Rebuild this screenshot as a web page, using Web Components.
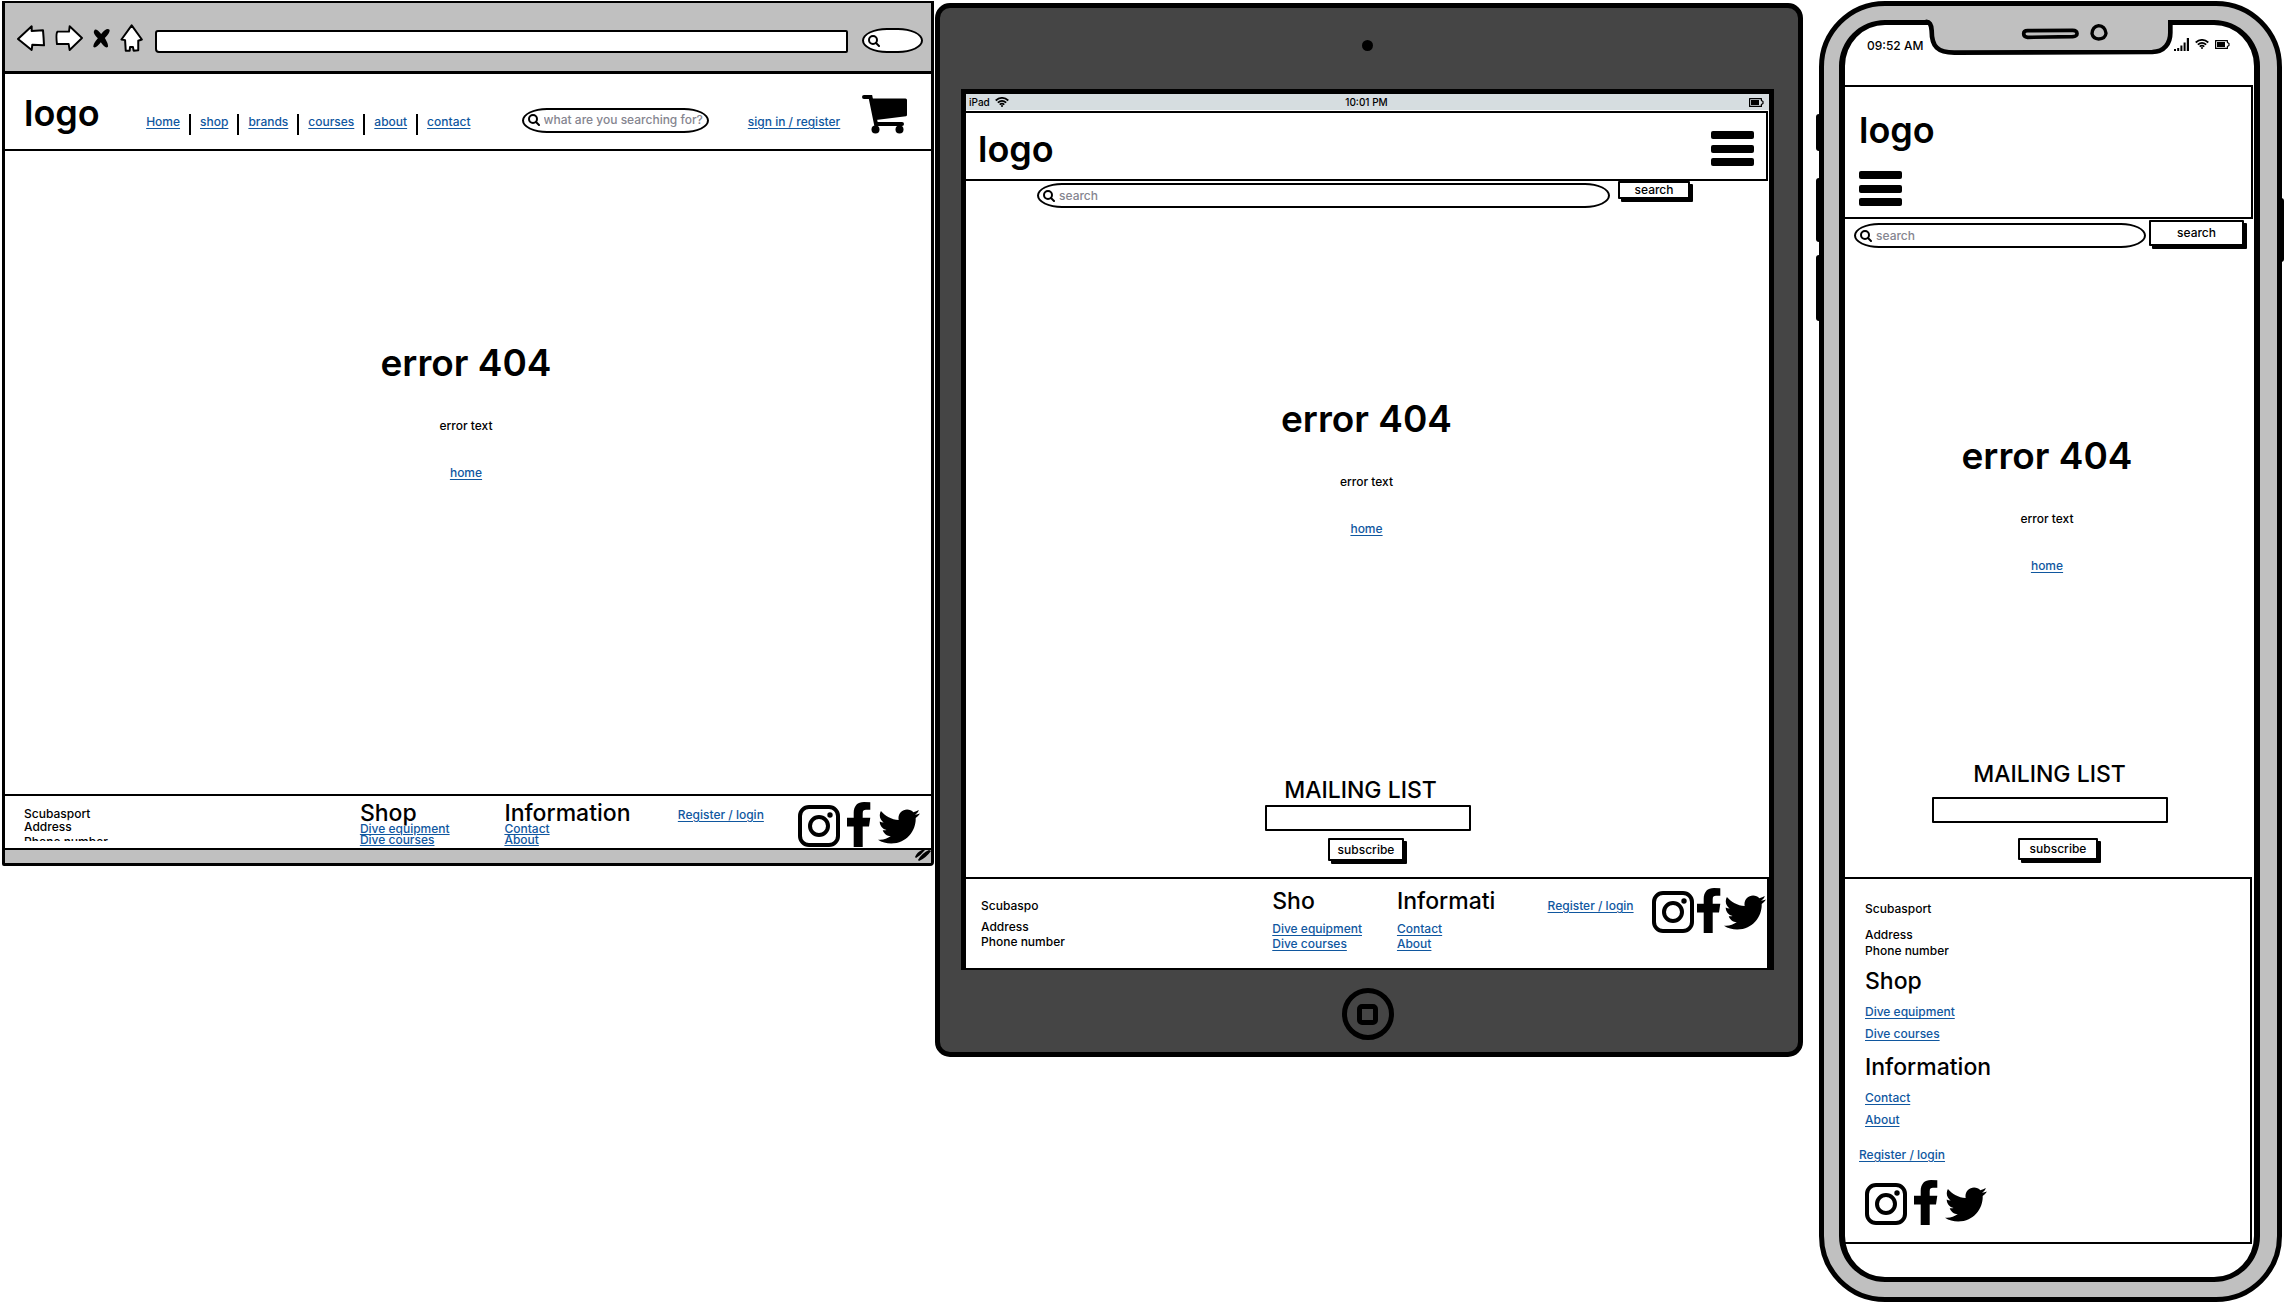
<!DOCTYPE html>
<html lang="en">
<head>
<meta charset="utf-8">
<title>Error 404 wireframes</title>
<style>
  body { margin: 0; background: #fff; color: #000; font: 500 12px/16px Inter, "Liberation Sans", sans-serif; }
</style>
</head>
<body>
<wire-board></wire-board>
<script>
const BASE = `
  *, *::before, *::after { box-sizing: border-box; }
  :host { display: block; }
  h1, h2, p { margin: 0; font-weight: inherit; }
  a { color: #10579f; text-decoration: underline; text-underline-offset: 2px; }
  button, input { font: inherit; color: inherit; margin: 0; padding: 0; border: 0; background: none; min-width: 0; }
  input { outline: 0; }
  svg { display: block; }
`;

function define(name, render) {
  customElements.define(name, class extends HTMLElement {
    connectedCallback() {
      if (this.shadowRoot) return;
      const template = document.createElement('template');
      template.innerHTML = `<style>${BASE}</style>` + render(this);
      this.attachShadow({ mode: 'open' }).append(template.content.cloneNode(true));
    }
  });
}

const ICONS = {
  back: [28, 26, '50 70 84 78', '<path d="M53 112 94 74 94 88 128 86Q130 108 131 131L96 129 94 145Z" fill="#fff" stroke="#000" stroke-width="6" stroke-linejoin="round"/>'],
  forward: [28, 26, '161 70 86 82', '<path d="M245 111 206 74 204 91 168 91Q162 95 166 130L203 130 206 149Z" fill="#fff" stroke="#000" stroke-width="6" stroke-linejoin="round"/>'],
  stop: [17, 20, '284 76 50 60', '<path d="M287 84Q291 74 308 94Q324 74 333 81Q336 90 319 106Q331 126 328 133Q320 139 307 119Q292 139 285 133Q282 126 298 107Q282 92 287 84Z"/>'],
  home: [23, 28, '358 67 69 85', '<path d="M393 71 362 114 373 116 375 148 387 148 388 137 397 137 399 148 413 147 413 118 424 114Z" fill="#fff" stroke="#000" stroke-width="6" stroke-linejoin="round"/>'],
  search: [12, 12, '0 0 12 12', '<g fill="none" stroke="#000" stroke-width="2"><circle cx="5" cy="5" r="4"/><path d="M8 8 11 11" stroke-linecap="round"/></g>'],
  cart: [45, 39, '0 0 45 39', '<path d="M2 2H8.500L14 29H40" fill="none" stroke="#000" stroke-width="4" stroke-linecap="round"/><path d="M9 3.500H43.500Q45 3.500 45 5V20Q45 21 44 21.200L14 25Z"/><circle cx="13.500" cy="34.500" r="4"/><circle cx="37.500" cy="34.500" r="4"/>'],
  menu: [43, 35, '0 0 43 35', '<rect width="43" height="8" rx="2"/><rect y="14" width="43" height="8" rx="2"/><rect y="27" width="43" height="8" rx="2"/>'],
  instagram: [42, 42, '0 0 42 42', '<g fill="none" stroke="#000"><rect x="2" y="2" width="38" height="38" rx="9" stroke-width="4"/><circle cx="21" cy="21" r="9" stroke-width="4"/></g><circle cx="32" cy="10" r="2.700"/>'],
  facebook: [24, 45, '0 0 24 45', '<path d="M23.300.3 17 0C10.500 0 6.700 4 6.700 10.800V15.700H0V24.600H6.700V45H15.700V24.600H22L23.300 15.700H15.700V11.500C15.700 8.500 16.800 7.800 19 7.800H23.300Z"/>'],
  twitter: [42, 35, '0 48 512 416', '<path d="M459.37 151.716c.325 4.548.325 9.097.325 13.645 0 138.72-105.583 298.558-298.558 298.558-59.452 0-114.68-17.219-161.137-47.106 8.447.974 16.568 1.299 25.34 1.299 49.055 0 94.213-16.568 130.274-44.832-46.132-.975-84.792-31.188-98.112-72.772 6.498.974 12.995 1.624 19.818 1.624 9.421 0 18.843-1.3 27.614-3.573-48.081-9.747-84.143-51.98-84.143-102.985v-1.299c13.969 7.797 30.214 12.67 47.431 13.319-28.264-18.843-46.781-51.005-46.781-87.391 0-19.492 5.197-37.36 14.294-52.954 51.655 63.675 129.3 105.258 216.365 109.807-1.624-7.797-2.599-15.918-2.599-24.04 0-57.828 46.782-104.934 104.934-104.934 30.213 0 57.502 12.67 76.67 33.137 23.715-4.548 46.456-13.32 66.599-25.34-7.798 24.366-24.366 44.833-46.132 57.827 21.117-2.273 41.584-8.122 60.426-16.243-14.292 20.791-32.161 39.308-52.628 54.253z"/>'],
  wifi: [14, 10, '0 0 14 10', '<g fill="none" stroke="#000" stroke-width="1.700"><path d="M.7 3.500Q7-1.800 13.300 3.500"/><path d="M2.800 5.700Q7 2 11.200 5.700"/><path d="M4.700 7.600Q7 5.500 9.300 7.600"/></g><circle cx="7" cy="9" r="1"/>'],
  battery: [15, 9, '0 0 15 9', '<path d="M.6.6H12.400V2.500L14 3.500V5.500L12.400 6.500V8.400H.6Z" fill="none" stroke="#000" stroke-width="1.200" stroke-linejoin="round"/><rect x="2" y="2" width="8" height="5"/>'],
  signal: [15, 13, '0 0 15 13', '<path d="M0 11h2v2H0zM3.200 10h2v3h-2zM6.400 7.500h2V13h-2zM9.600 4.500h2V13h-2zM12.800 0H15v13h-2.200z"/>'],
  grip: [17, 11, '0 0 17 11', '<path d="M1 7Q3 2 8 0H11Q7 5 2 8ZM4 10Q8 3 15 0L17 1Q12 8 5 11Z"/>'],
  notch: [249, 38, '372 54 747 114', '<path d="M380 54V66Q391 68 392 92C392 140 410 158 460 158L1054 156C1090 155 1108 130 1108 98V54Z" fill="#c0c0c0"/><path d="M374 66Q391 64 392 92C392 140 410 158 460 158L1054 156C1090 155 1108 130 1108 98V67H1119" fill="none" stroke="#000" stroke-width="14"/><path d="M680 92Q668 92 668 101T680 112L815 110Q829 109 828 100T815 91Z" fill="none" stroke="#000" stroke-width="11"/><path d="M893 77Q874 80 873 101 876 116 893 117 913 116 915 100 912 78 893 77Z" fill="none" stroke="#000" stroke-width="10"/>']
};

define('wire-icon', el => {
  const [w, h, box, body] = ICONS[el.getAttribute('name')];
  return `<style>:host { flex: none; width: ${w}px; }</style>
    <svg width="${w}" height="${h}" viewBox="${box}" aria-hidden="true">${body}</svg>`;
});

define('search-pill', el => `
  <style>
    label { display: flex; align-items: center; gap: 4px; height: 25px; padding: 0 1px 0 4px; border: 2px solid #000; border-radius: 26px / 13px; background: #fff; }
    input { flex: 1; width: 100%; }
    input::placeholder { color: #85858f; opacity: 1; }
  </style>
  <label><wire-icon name="search"></wire-icon>
    <input type="text" aria-label="${el.getAttribute('label')}" placeholder="${el.getAttribute('text') || ''}"></label>`);

define('wire-button', () => `
  <style>
    :host { padding: 0 3px 3px 0; }
    button { display: block; width: 100%; height: var(--button-height, 23px); padding: 0 var(--button-pad, 8px); border: 2px solid #000; border-radius: 1px; background: #fff; box-shadow: 3px 3px #000; line-height: 14px; }
  </style>
  <button type="button"><slot></slot></button>`);

define('menu-button', () => `
  <style>button { display: block; }</style>
  <button type="button" aria-label="Menu"><wire-icon name="menu"></wire-icon></button>`);

define('site-logo', () => `
  <style>:host { font-size: 36px; line-height: 40px; font-weight: 600; }</style><slot></slot>`);

define('error-message', () => `
  <style>
    :host { display: flex; flex-direction: column; align-items: center; gap: 31px; padding: var(--error-pad); }
    h1 { font-size: 37px; line-height: 48px; font-weight: 600; }
  </style>
  <h1>error 404</h1><p>error text</p><a href="#">home</a>`);

define('mailing-list', () => `
  <style>
    :host { display: flex; flex-direction: column; align-items: center; }
    h2 { padding-right: var(--heading-inset, 0); font-size: 23px; line-height: 28px; }
    input { width: var(--field-width, 206px); height: 26px; margin: var(--field-margin, 1px 0 7px); border: 2px solid #000; border-radius: 1px; background: #fff; }
    wire-button { margin-left: var(--button-inset, 0); }
  </style>
  <h2>MAILING LIST</h2>
  <input type="email" aria-label="Email address">
  <wire-button>subscribe</wire-button>`);

define('social-links', () => `
  <style>
    :host { display: flex; align-items: flex-end; gap: var(--social-gap, 7px); }
    a { color: #000; }
    .raised { padding-bottom: 3px; }
  </style>
  <a href="#" aria-label="Instagram"><wire-icon name="instagram"></wire-icon></a>
  <a href="#" aria-label="Facebook"><wire-icon name="facebook"></wire-icon></a>
  <a href="#" class="raised" aria-label="Twitter"><wire-icon name="twitter"></wire-icon></a>`);

/* Footer: a row of columns, or one stacked column on the phone. */
define('site-footer', el => {
  const attr = (n, d) => el.getAttribute(n) || d;
  return `
  <style>
    footer { display: grid; align-items: start; border-top: 2px solid #000; }
    h2 { font-size: 23px; }
    a { display: table; }
    :host([layout="desktop"]) footer { grid-template-columns: 337fr 145fr 174fr 121fr 133fr; height: 56px; padding: 6px 0 0 19px; border-bottom: 2px solid #000; }
    :host([layout="desktop"]) .contact { padding-top: 5px; line-height: 13px; }
    :host([layout="desktop"]) .phone { height: 6px; margin-top: 2px; overflow: hidden; }
    :host([layout="desktop"]) h2 { line-height: 20px; }
    :host([layout="desktop"]) .group a { line-height: 11px; text-underline-offset: 1px; }
    :host([layout="desktop"]) .group { padding-top: 1px; }
    :host([layout="desktop"]) .account { padding-top: 5px; }

    :host([layout="tablet"]) footer { grid-template-columns: 292fr 125fr 151fr 105fr 115fr; height: 91px; padding: 9px 0 0 15px; border-right: 2px solid #000; }
    :host([layout="tablet"]) .contact { line-height: 15px; padding-top: 10px; }
    :host([layout="tablet"]) .name { margin-bottom: 6px; }
    :host([layout="tablet"]) h2 { line-height: 26px; margin-bottom: 7px; }
    :host([layout="tablet"]) .group a { line-height: 15px; }
    :host([layout="tablet"]) .account { padding-top: 10px; }
    :host([layout="tablet"]) social-links { --social-gap: 3px; }

    :host([layout="phone"]) footer { padding: 22px 0 17px 20px; border-right: 2px solid #000; border-bottom: 2px solid #000; margin-right: 2px; }
    :host([layout="phone"]) .name { margin-bottom: 10px; }
    :host([layout="phone"]) .contact { line-height: 16px; }
    :host([layout="phone"]) h2 { line-height: 28px; margin: 8px 0 6px; }
    :host([layout="phone"]) .group a { line-height: 22px; }
    :host([layout="phone"]) .account { margin: 16px 0 17px -6px; }
  </style>
  <footer>
    <div class="contact"><p class="name">${attr('name', 'Scubasport')}</p><p>Address</p><p class="phone">Phone number</p></div>
    <div class="group"><h2>${attr('shop', 'Shop')}</h2><a href="#">Dive equipment</a><a href="#">Dive courses</a></div>
    <div class="group"><h2>${attr('info', 'Information')}</h2><a href="#">Contact</a><a href="#">About</a></div>
    <div class="account"><a href="#">Register / login</a></div>
    <social-links></social-links>
  </footer>`;
});

define('site-nav', () => `
  <style>
    nav { display: flex; align-items: baseline; gap: 9px; }
    i { width: 2px; height: 21px; background: #000; align-self: flex-end; margin-bottom: 1px; }
  </style>
  <nav>${['Home', 'shop', 'brands', 'courses', 'about', 'contact'].map(t => `<a href="#">${t}</a>`).join('<i></i>')}</nav>`);

define('browser-frame', () => `
  <style>
    .window { margin: 1px 1px 0 2px; border: 3px solid #000; border-top-width: 2px; border-radius: 0 0 4px 2px; background: #fff; }
    .chrome { display: flex; align-items: flex-end; height: 68px; padding: 0 8px 18px 12px; background: #c0c0c0; }
    .controls { display: flex; align-items: center; gap: 10px; margin: 0 12px 1px 0; }
    .address { flex: 1; height: 23px; margin-right: 14px; border: 2px solid #000; border-radius: 3px 2px 2px 4px; background: #fff; }
    search-pill { width: 61px; }
    .header { display: grid; grid-template-columns: 122fr 375fr 226fr 114fr 69fr; align-items: baseline; height: 80px; padding: 19px 0 0 19px; border-top: 3px solid #000; border-bottom: 2px solid #000; }
    .header search-pill { width: 83%; }
    .cart { align-self: start; margin-top: 2px; justify-self: start; }
    .status { display: flex; justify-content: flex-end; height: 13px; background: #c0c0c0; }
  </style>
  <section class="window">
    <div class="chrome">
      <div class="controls">
        <button type="button" aria-label="Back"><wire-icon name="back"></wire-icon></button>
        <button type="button" aria-label="Forward"><wire-icon name="forward"></wire-icon></button>
        <button type="button" aria-label="Stop"><wire-icon name="stop"></wire-icon></button>
        <button type="button" aria-label="Home page"><wire-icon name="home"></wire-icon></button>
      </div>
      <input class="address" type="text" aria-label="Address">
      <search-pill label="Browser search"></search-pill>
    </div>
    <header class="header">
      <site-logo>logo</site-logo>
      <site-nav></site-nav>
      <search-pill label="Search the site" text="what are you searching for?"></search-pill>
      <a href="#">sign in / register</a>
      <button class="cart" type="button" aria-label="Cart"><wire-icon name="cart"></wire-icon></button>
    </header>
    <error-message style="--error-pad: 188px 4px 313px 0"></error-message>
    <site-footer layout="desktop"></site-footer>
    <div class="status"><wire-icon name="grip"></wire-icon></div>
  </section>`);

define('tablet-frame', () => `
  <style>
    .body { margin-top: 3px; padding: 0 24px 0 21px; border: 5px solid #000; border-radius: 15px; background: #454545; }
    .camera { width: 11px; height: 11px; margin: 32px auto 38px; border-radius: 50%; background: #000; }
    .screen { border: 5px solid #000; border-bottom-width: 2px; background: #fff; }
    .status { display: grid; grid-template-columns: 1fr auto 1fr; align-items: center; height: 17px; padding: 0 5px 0 3px; border-bottom: 1px solid #fff; background: #d6dde0; font-size: 10px; }
    .left { display: flex; align-items: center; gap: 5px; }
    .right { justify-self: end; }
    .header { display: flex; justify-content: space-between; align-items: center; height: 70px; padding: 5px 12px 0 12px; border: 2px solid #000; border-left: 0; margin-right: 1px; }
    .search { display: grid; grid-template-columns: 573fr 75fr; gap: 8px; align-items: start; padding: 0 76px 0 71px; height: 28px; }
    search-pill { margin-top: 2px; }
    .search wire-button { --button-height: 18px; }
    mailing-list { --heading-inset: 14px; margin-bottom: 13px; }
    .home { display: grid; place-items: center; width: 52px; height: 52px; margin: 18px auto 12px; border: 5px solid #000; border-radius: 50%; }
    .home span { width: 21px; height: 21px; border: 5px solid #000; border-radius: 5px; }
  </style>
  <section class="body">
    <div class="camera"></div>
    <div class="screen">
      <div class="status"><span class="left">iPad <wire-icon name="wifi"></wire-icon></span><span>10:01 PM</span><wire-icon class="right" name="battery"></wire-icon></div>
      <header class="header"><site-logo>logo</site-logo><menu-button></menu-button></header>
      <div class="search"><search-pill label="Search" text="search"></search-pill><wire-button>search</wire-button></div>
      <error-message style="--error-pad: 186px 2px 239px 0"></error-message>
      <mailing-list></mailing-list>
      <site-footer layout="tablet" name="Scubaspo" shop="Sho" info="Informati"></site-footer>
    </div>
    <button class="home" type="button" aria-label="Home"><span></span></button>
  </section>`);

define('phone-frame', () => `
  <style>
    :host { position: relative; padding: 0 2px 0 3px; }
    .key { position: absolute; left: 0; width: 6px; border-radius: 3px; background: #000; }
    .body { position: relative; margin-top: 1px; padding: 14px 17px 15px 15px; border: 5px solid #000; border-radius: 66px; background: #c0c0c0; }
    .screen { border: 6px solid #000; border-width: 5px 6px; border-radius: 46px; background: #fff; }
    .status { display: grid; grid-template-columns: 1fr auto 1fr; height: 60px; }
    .time { padding: 13px 0 0 22px; white-space: nowrap; }
    .notch { margin-top: -7px; }
    .icons { display: flex; align-items: center; gap: 6px; height: 38px; }
    .header { display: grid; justify-items: start; gap: 21px; padding: 23px 0 11px 14px; border: 2px solid #000; border-left: 0; margin-right: 1px; }
    .search { display: grid; grid-template-columns: 292fr 98fr; gap: 3px; align-items: start; padding: 1px 7px 0 9px; height: 30px; }
    search-pill { margin-top: 3px; }
    .search wire-button { --button-height: 26px; }
    mailing-list { --field-width: 236px; --field-margin: 9px 0 15px; --button-height: 22px; --button-pad: 10px; --button-inset: 20px; margin-bottom: 14px; }
    .chin { height: 33px; }
  </style>
  <span class="key" style="top: 114px; height: 37px"></span>
  <span class="key" style="top: 178px; height: 64px"></span>
  <span class="key" style="top: 255px; height: 66px"></span>
  <span class="key" style="top: 198px; height: 64px; left: auto; right: 0"></span>
  <section class="body"><div class="screen">
    <div class="status"><span class="time">09:52 AM</span><wire-icon class="notch" name="notch"></wire-icon>
      <span class="icons"><wire-icon name="signal"></wire-icon><wire-icon name="wifi"></wire-icon><wire-icon name="battery"></wire-icon></span></div>
    <header class="header"><site-logo>logo</site-logo><menu-button></menu-button></header>
    <div class="search"><search-pill label="Search" text="search"></search-pill><wire-button>search</wire-button></div>
    <error-message style="--error-pad: 183px 5px 186px 0"></error-message>
    <mailing-list></mailing-list>
    <site-footer layout="phone"></site-footer>
    <div class="chin"></div>
  </div></section>`);

define('wire-board', () => `
  <style>
    :host { display: grid; grid-template-columns: 935fr 868fr 481fr; align-items: start; }
    phone-frame { margin-left: 13px; }
  </style>
  <browser-frame></browser-frame><tablet-frame></tablet-frame><phone-frame></phone-frame>`);
</script>
</body>
</html>
